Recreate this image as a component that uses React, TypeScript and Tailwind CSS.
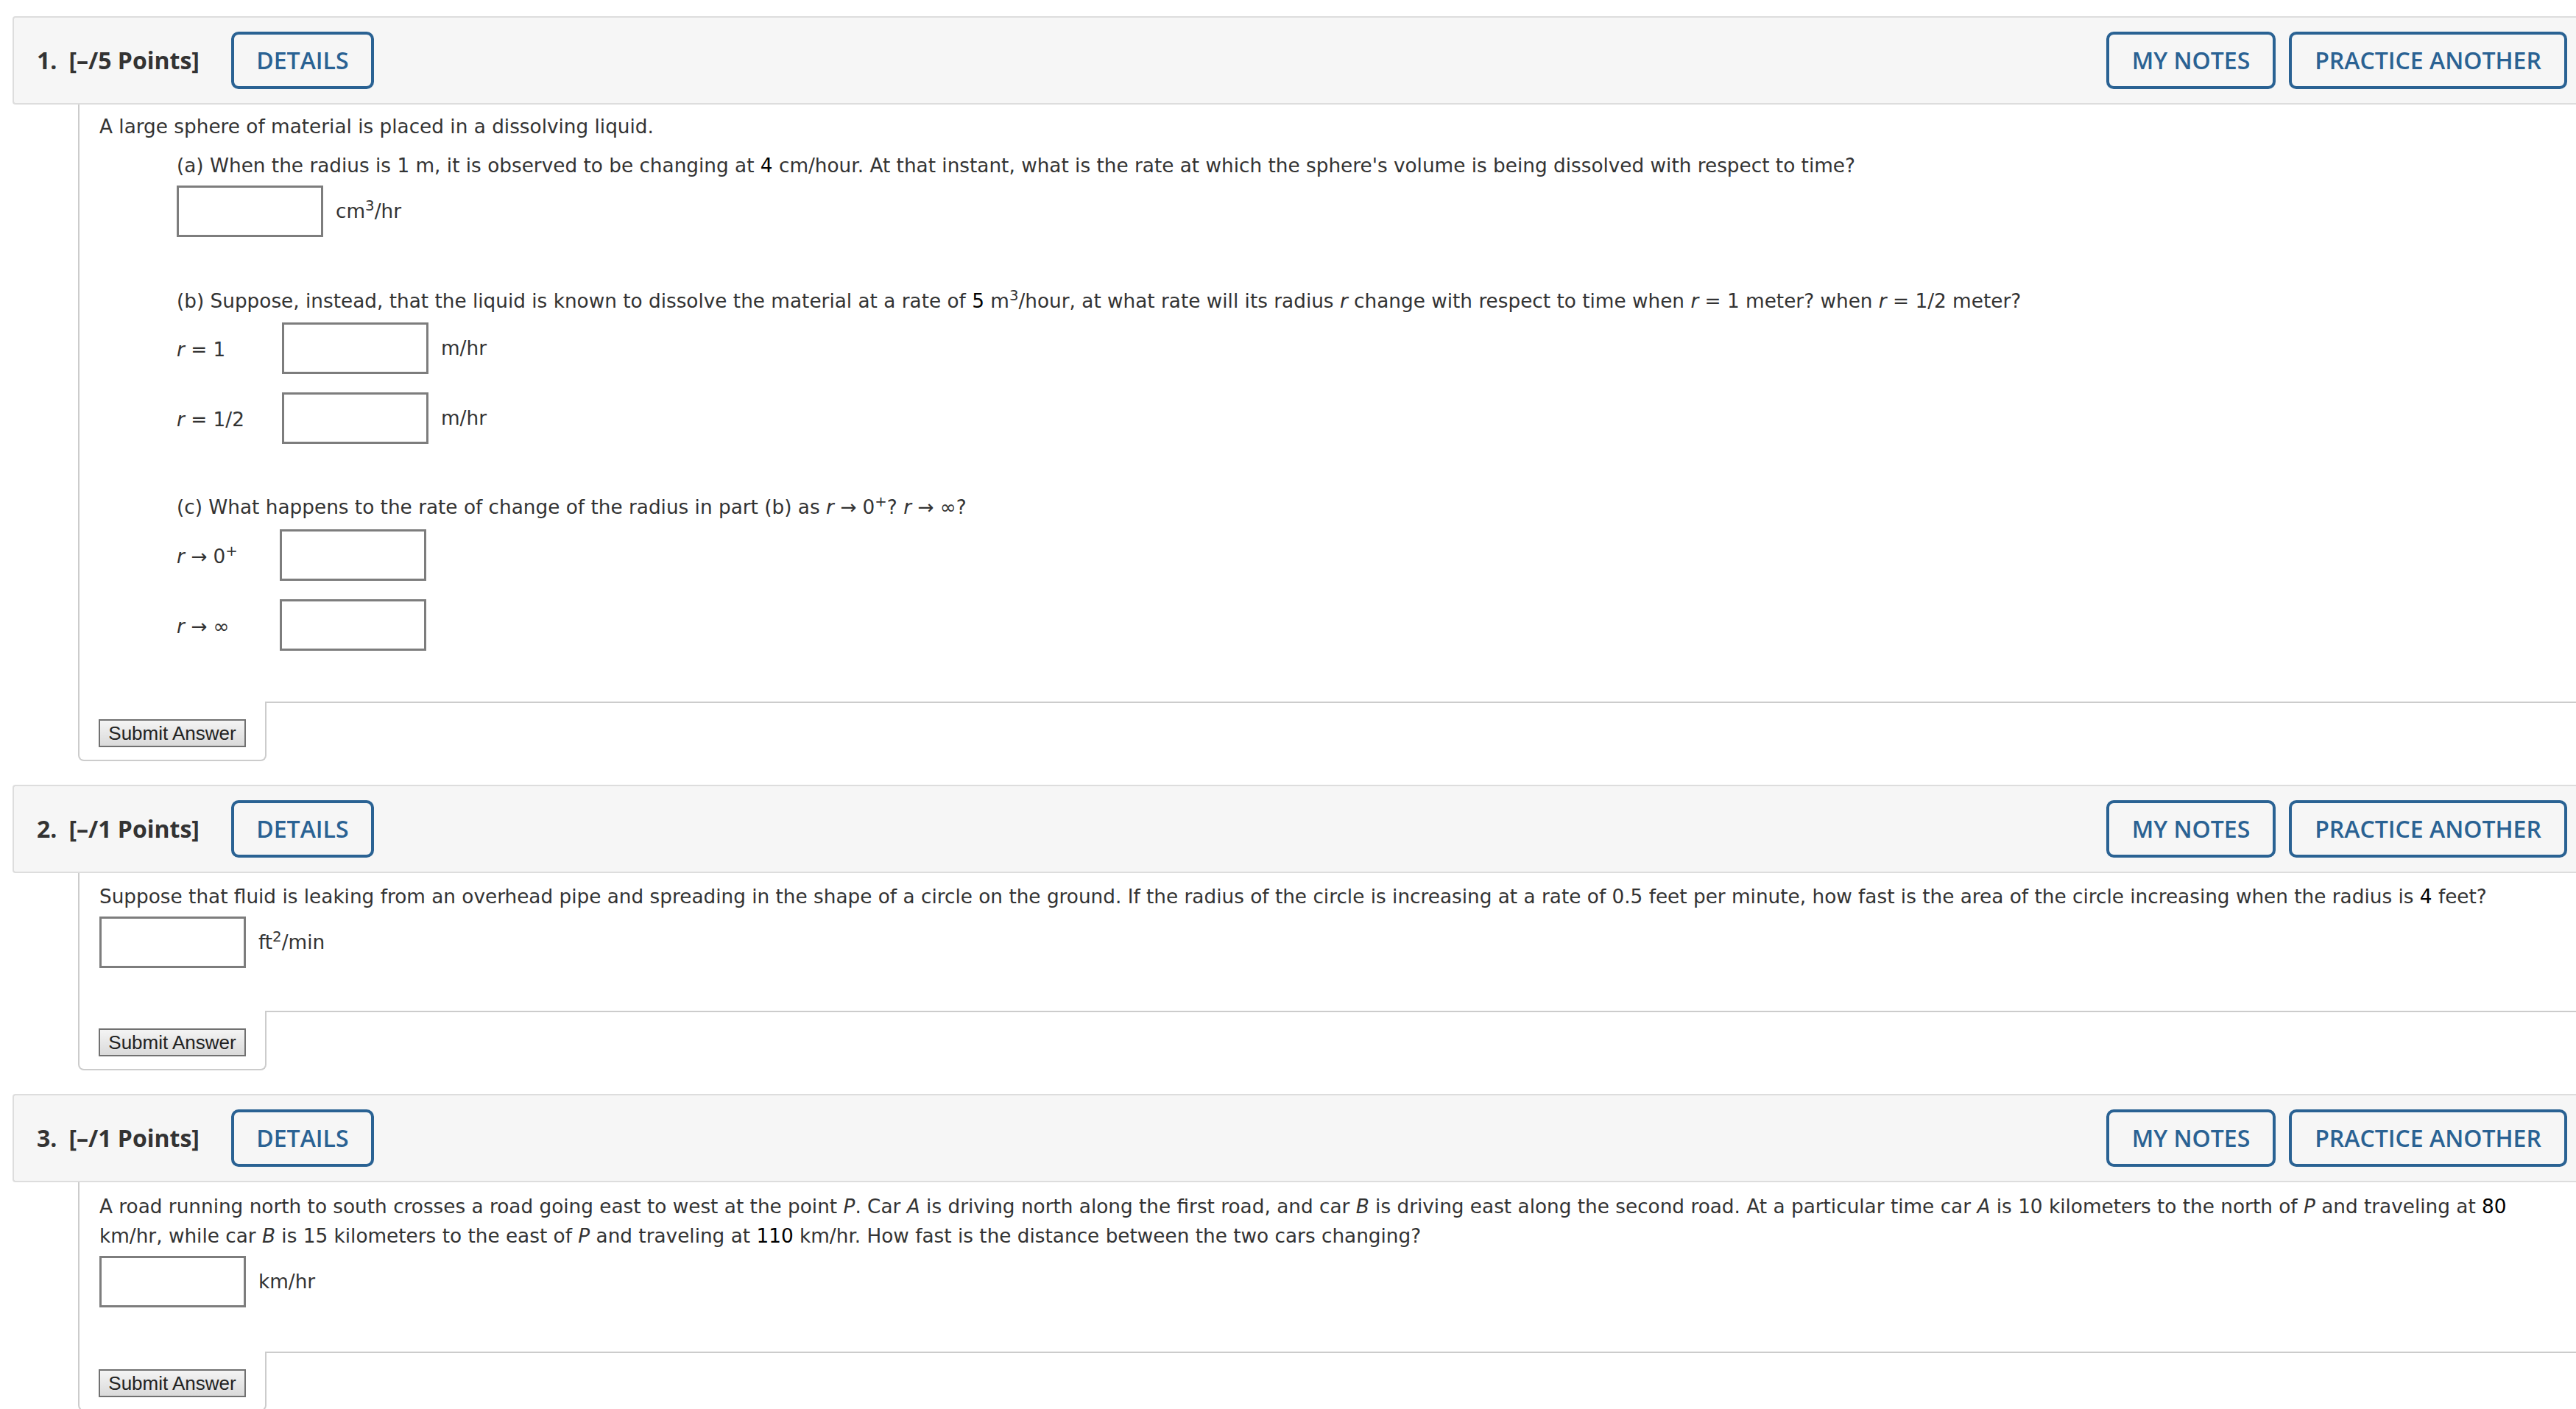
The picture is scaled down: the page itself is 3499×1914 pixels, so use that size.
import React from 'react';

// WebAssign style question list
const HEADER_BTN =
  "flex h-[78px] items-center justify-center rounded-[10px] border-4 border-[#2a6293] bg-transparent text-[32px] font-semibold text-[#2a6293]";

function Num({ children }: { children: React.ReactNode }) {
  return <span className="text-black">{children}</span>;
}

function AnswerBox() {
  return <input type="text" className="block h-[70px] w-[199px] shrink-0 border-[3px] border-[#7d7d7d] bg-white outline-none" />;
}

function QuestionHeader({ num, points }: { num: number; points: number }) {
  return (
    <div className="flex h-[120px] items-center rounded-l-[4px] border-2 border-r-0 border-[#dddddd] bg-[#f6f6f6] pl-[31px] pr-[12px] font-['Open_Sans',sans-serif]">
      <span className="text-[32px] font-bold text-[#333333]">{num}.</span>
      <span className="ml-[16px] text-[32px] font-bold text-[#333333]">[–/{points} Points]</span>
      <button className={`${HEADER_BTN} ml-[43px] w-[194px]`}>DETAILS</button>
      <div className="ml-auto flex gap-[18px]">
        <button className={`${HEADER_BTN} w-[230px]`}>MY NOTES</button>
        <button className={`${HEADER_BTN} w-[378px]`}>PRACTICE ANOTHER</button>
      </div>
    </div>
  );
}

function SubmitTab({ pt }: { pt: string }) {
  return (
    <div className="flex">
      <div className={`w-[256px] shrink-0 rounded-b-[8px] border-x-2 border-b-2 border-[#cccccc] pb-[16px] pl-[26px] ${pt}`}>
        <button className="h-[38px] w-[200px] border-2 border-[#717171] bg-linear-to-b from-[#f4f4f4] to-[#dadada] font-['Liberation_Sans',Arial,sans-serif] text-[26px] leading-none text-[#222222]">
          Submit Answer
        </button>
      </div>
      <div className="flex-1 border-t-2 border-[#cccccc]" />
    </div>
  );
}

function QuestionBody({ children, pt, pb, tabPt }: { children: React.ReactNode; pt: string; pb: string; tabPt: string }) {
  return (
    <div className="ml-[89px]">
      <div className={`border-l-2 border-[#cccccc] pl-[27px] pr-[40px] ${pt} ${pb}`}>{children}</div>
      <SubmitTab pt={tabPt} />
    </div>
  );
}

function Row({ label, labelW, unit }: { label?: React.ReactNode; labelW?: string; unit?: React.ReactNode }) {
  return (
    <div className="flex items-center">
      {label && <span className={`pt-[3px] ${labelW}`}>{label}</span>}
      <AnswerBox />
      {unit && <span className="ml-[17px]">{unit}</span>}
    </div>
  );
}

export default function App() {
  return (
    <div className="min-h-screen overflow-hidden bg-white pl-[17px] pt-[22px] font-['DejaVu_Sans',Verdana,sans-serif] text-[26.3px] leading-[40px] text-[#333333]">
      {/* Question 1 */}
      <QuestionHeader num={1} points={5} />
      <QuestionBody pt="pt-[10px]" pb="pb-[69px]" tabPt="pt-[23px]">
        <p>A large sphere of material is placed in a dissolving liquid.</p>
        <div className="ml-[105px]">
          <p className="mt-[13px]">
            (a) When the radius is 1 m, it is observed to be changing at <Num>4</Num> cm/hour. At that instant, what is the rate at which the sphere's volume is being dissolved with respect to time?
          </p>
          <div className="mt-[7px]">
            <Row unit={<>cm<sup>3</sup>/hr</>} />
          </div>
          <p className="mt-[67px]">
            (b) Suppose, instead, that the liquid is known to dissolve the material at a rate of <Num>5</Num> m<sup>3</sup>/hour, at what rate will its radius <i>r</i> change with respect to time when <i>r</i> = 1 meter? when <i>r</i> = 1/2 meter?
          </p>
          <div className="mt-[9px]">
            <Row label={<><i>r</i> = 1</>} labelW="w-[143px]" unit="m/hr" />
          </div>
          <div className="mt-[25px]">
            <Row label={<><i>r</i> = 1/2</>} labelW="w-[143px]" unit="m/hr" />
          </div>
          <p className="mt-[66px]">
            (c) What happens to the rate of change of the radius in part (b) as <i>r</i> → 0<sup>+</sup>? <i>r</i> → ∞?
          </p>
          <div className="mt-[10px]">
            <Row label={<><i>r</i> → 0<sup>+</sup></>} labelW="w-[140px]" />
          </div>
          <div className="mt-[25px]">
            <Row label={<><i>r</i> → ∞</>} labelW="w-[140px]" />
          </div>
        </div>
      </QuestionBody>

      {/* Question 2 */}
      <div className="mt-[32px]">
        <QuestionHeader num={2} points={1} />
      </div>
      <QuestionBody pt="pt-[12px]" pb="pb-[58px]" tabPt="pt-[23px]">
        <p>
          Suppose that fluid is leaking from an overhead pipe and spreading in the shape of a circle on the ground. If the radius of the circle is increasing at a rate of 0.5 feet per minute, how fast is the area of the circle increasing when the radius is <Num>4</Num> feet?
        </p>
        <div className="mt-[7px]">
          <Row unit={<>ft<sup>2</sup>/min</>} />
        </div>
      </QuestionBody>

      {/* Question 3 */}
      <div className="mt-[32px]">
        <QuestionHeader num={3} points={1} />
      </div>
      <QuestionBody pt="pt-[13px]" pb="pb-[60px]" tabPt="pt-[23px]">
        <p>
          A road running north to south crosses a road going east to west at the point <i>P</i>. Car <i>A</i> is driving north along the first road, and car <i>B</i> is driving east along the second road. At a particular time car <i>A</i> is 10 kilometers to the north of <i>P</i> and traveling at <Num>80</Num> km/hr, while car <i>B</i> is 15 kilometers to the east of <i>P</i> and traveling at <Num>110</Num> km/hr. How fast is the distance between the two cars changing?
        </p>
        <div className="mt-[7px]">
          <Row unit="km/hr" />
        </div>
      </QuestionBody>
    </div>
  );
}
